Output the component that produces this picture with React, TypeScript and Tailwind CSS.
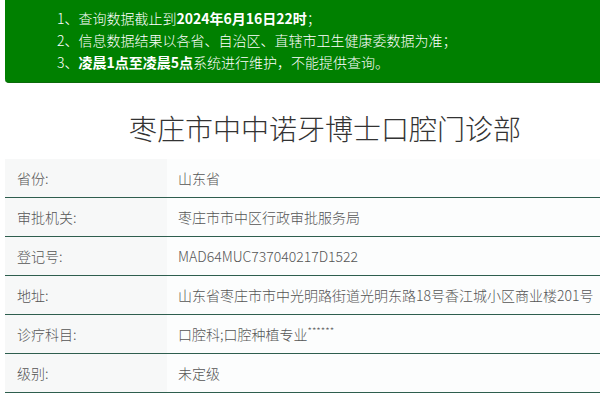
import type { ReactNode } from "react"

const rows: [string, ReactNode][] = [
  ["省份:", "山东省"],
  ["审批机关:", "枣庄市市中区行政审批服务局"],
  ["登记号:", "MAD64MUC737040217D1522"],
  ["地址:", "山东省枣庄市市中光明路街道光明东路18号香江城小区商业楼201号"],
  [
    "诊疗科目:",
    <>
      口腔科;口腔种植专业<span className="text-[10px] leading-none relative -top-[3px]">******</span>
    </>,
  ],
  ["级别:", "未定级"],
]

export default function App() {
  return (
    <div className="w-[600px] h-[400px] overflow-hidden bg-white font-['Noto_Sans_CJK_SC','Noto_Sans',sans-serif]">
      <div className="ml-[5px] w-[660px] bg-[#008000] rounded-bl-[4px] border-b border-[#0a6b0a] pt-[7px] pb-[9px] pl-[52px] text-white text-[14px] leading-[22px] font-light">
        <p>1、查询数据截止到<b className="font-bold">2024年6月16日22时</b>；</p>
        <p>2、信息数据结果以各省、自治区、直辖市卫生健康委数据为准；</p>
        <p>3、<b className="font-bold">凌晨1点至凌晨5点</b>系统进行维护，不能提供查询。</p>
      </div>

      <div className="ml-[5px] w-[640px]">
        <h1 className="mt-[25px] text-center text-[28px] leading-[40px] text-[#333] font-light">
          枣庄市中中诺牙博士口腔门诊部
        </h1>

        <div className="mt-[11px] text-[14px] text-[#555] font-light">
          {rows.map(([label, value], i) => (
            <div key={i} className="flex h-[39px] border-b border-[#2e5e4e]">
              <div className="w-[162px] shrink-0 bg-[#f7f8f8] pl-[12px] flex items-center">{label}</div>
              <div className="flex-1 bg-[#fcfdfd] pl-[11px] flex items-center whitespace-nowrap">{value}</div>
            </div>
          ))}
        </div>
      </div>
    </div>
  )
}
